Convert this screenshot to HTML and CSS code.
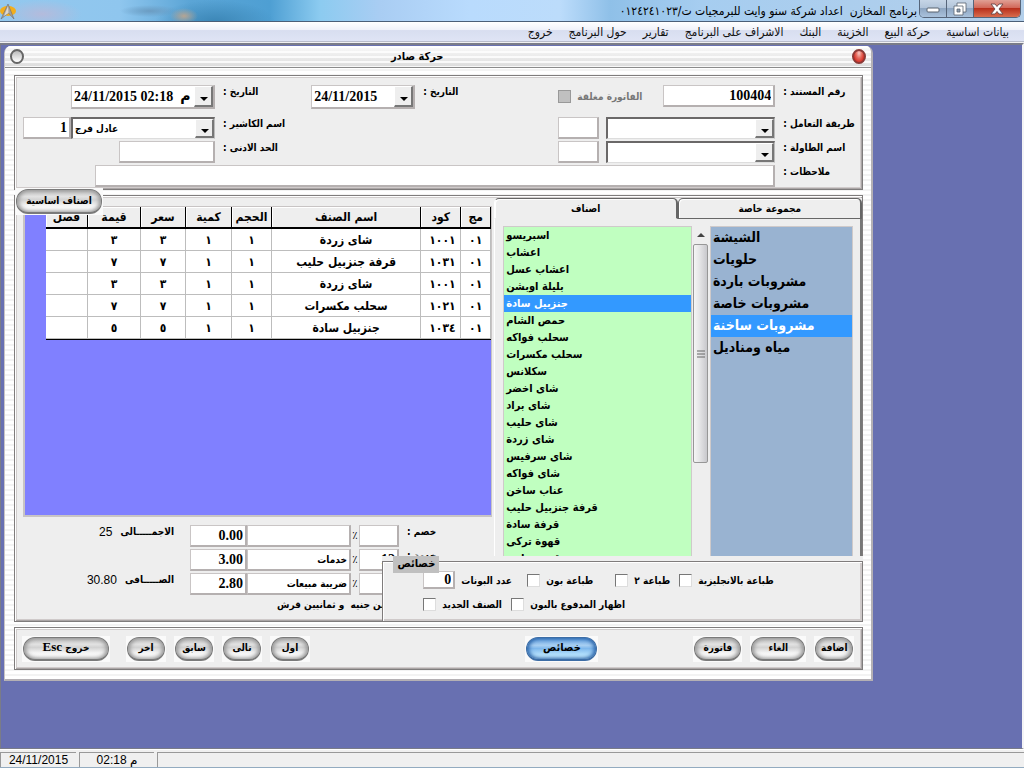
FILE: index.html
```html
<!DOCTYPE html>
<html lang="ar">
<head>
<meta charset="utf-8">
<title>برنامج المخازن</title>
<link rel="stylesheet" href="styles.css">
</head>
<body>
<header class="titlebar">
  <svg class="app-icon" width="16" height="16" viewBox="0 0 16 16"><ellipse cx="8" cy="7" rx="8" ry="5" fill="#f3ae1c"/><path d="M8 0 L14 15 L8.500 9 L1 15 Z" fill="#a5a09c" stroke="#716d6c" stroke-width=".6"/><path d="M8 2 L8.500 9 L4 12 Z" fill="#ddd8d0"/></svg>
  <h1 class="app-title" dir="rtl">برنامج المخازن&nbsp; اعداد شركة سنو وايت للبرمجيات ت/٠١٢٤٢٤١٠٢٣</h1>
  <div class="win-buttons">
    <button class="win-btn" aria-label="تصغير"><svg width="14" height="12" viewBox="0 0 14 12"><rect x="1" y="5" width="12" height="4" rx="1" fill="#fff" stroke="#59636e"/></svg></button>
    <button class="win-btn" aria-label="استعادة"><svg width="14" height="14" viewBox="0 0 14 14"><g fill="#fff" stroke="#59636e" stroke-width=".8"><path d="M4 1h9v9h-9z"/><path d="M1 4h9v9h-9z"/><path d="M4 7h3v3h-3z" fill="#8d9db0"/></g></svg></button>
    <button class="win-btn close" aria-label="اغلاق"><svg width="14" height="12" viewBox="0 0 14 12"><path d="M1 1h4l2 2.500 2-2.500h4l-4 5 4 5h-4l-2-2.500-2 2.500h-4l4-5z" fill="#fff" stroke="#6a4747" stroke-width=".9"/></svg></button>
  </div>
</header>
<nav class="menubar" dir="rtl">
  <a href="#">بيانات اساسية</a><a href="#">حركة البيع</a><a href="#">الخزينة</a><a href="#">البنك</a><a href="#">الاشراف على البرنامج</a><a href="#">تقارير</a><a href="#">حول البرنامج</a><a href="#">خروج</a>
</nav>
<main class="desktop">
  <section class="window">
    <div class="window-head">
      <button class="orb" aria-label="تصغير"></button>
      <h2 dir="rtl">حركة صادر</h2>
      <button class="orb red" aria-label="اغلاق"></button>
    </div>
    <div class="window-body">
      <form class="panel fields">
        <div class="cell a tall"><span class="combo w-datetime"><select id="dt" class="serif"><option>24/11/2015 02:18 &nbsp;م</option></select></span></div>
        <label class="b" for="dt" dir="rtl">التاريخ :</label>
        <div class="cell c tall"><span class="combo w-full"><select id="date" class="serif"><option>24/11/2015</option></select></span></div>
        <label class="d" for="date" dir="rtl">التاريخ :</label>
        <div class="cell e tall"><input id="closed" class="check off" type="checkbox" disabled><label class="muted" for="closed" dir="rtl">الفاتورة مغلقة</label><input id="doc" class="box w-doc num" value="100404"></div>
        <label class="g" for="doc" dir="rtl">رقم المستند :</label>

        <div class="cell a row2"><input class="box w-code num" value="1" aria-label="كود الكاشير"><span class="combo deep grow"><select id="cashier"><option>عادل فرج</option></select></span></div>
        <label class="b row2" for="cashier" dir="rtl">اسم الكاشير :</label>
        <div class="cell e row2 split"><input class="box w-small" aria-label="كود التعامل"><span class="combo deep grow"><select id="deal"><option></option></select></span></div>
        <label class="g row2" for="deal" dir="rtl">طريقة التعامل :</label>

        <div class="cell a row3"><input id="min" class="box w-min"></div>
        <label class="b row3" for="min" dir="rtl">الحد الادنى :</label>
        <div class="cell e row3 split"><input class="box w-small" aria-label="كود الطاولة"><span class="combo deep grow"><select id="table"><option></option></select></span></div>
        <label class="g row3" for="table" dir="rtl">اسم الطاولة :</label>

        <div class="cell notes"><input id="notes" class="box grow"></div>
        <label class="g row4" for="notes" dir="rtl">ملاحظات :</label>
      </form>

      <section class="panel work">
        <div class="left">
          <div class="sheet">
            <table dir="rtl">
              <colgroup><col class="k1"><col class="k2"><col class="k3"><col class="k4"><col class="k5"><col class="k6"><col class="k7"><col class="k8"></colgroup>
              <thead><tr><th>مج</th><th>كود</th><th>اسم الصنف</th><th>الحجم</th><th>كمية</th><th>سعر</th><th>قيمة</th><th>فصل</th></tr></thead>
              <tbody>
                <tr><td dir="ltr">٠١</td><td dir="ltr" class="code">١٠٠١</td><td>شاى زردة</td><td>١</td><td>١</td><td>٣</td><td>٣</td><td></td></tr>
                <tr><td dir="ltr">٠١</td><td dir="ltr" class="code">١٠٣١</td><td>قرفة جنزبيل حليب</td><td>١</td><td>١</td><td>٧</td><td>٧</td><td></td></tr>
                <tr><td dir="ltr">٠١</td><td dir="ltr" class="code">١٠٠١</td><td>شاى زردة</td><td>١</td><td>١</td><td>٣</td><td>٣</td><td></td></tr>
                <tr><td dir="ltr">٠١</td><td dir="ltr" class="code">١٠٢١</td><td>سحلب مكسرات</td><td>١</td><td>١</td><td>٧</td><td>٧</td><td></td></tr>
                <tr><td dir="ltr">٠١</td><td dir="ltr" class="code">١٠٣٤</td><td>جنزبيل سادة</td><td>١</td><td>١</td><td>٥</td><td>٥</td><td></td></tr>
              </tbody>
            </table>
          </div>
          <div class="totals">
            <div class="sum"><span>25</span><b dir="rtl">الاجمـــــالى</b></div>
            <div class="line"><input class="box num w-amount" value="0.00" aria-label="قيمة الخصم"><input class="box desc" aria-label="بيان الخصم"><span class="pct">٪</span><input id="disc" class="box w-pct"><label for="disc" dir="rtl">خصم :</label></div>
            <div class="sum"></div>
            <div class="line"><input class="box num w-amount" value="3.00" aria-label="قيمة الخدمة"><input class="box desc" dir="rtl" value="خدمات" aria-label="بيان الخدمة"><span class="pct">٪</span><input id="serv" class="box w-pct num" value="12"><label for="serv" dir="rtl">خدمة :</label></div>
            <div class="sum"><span>30.80</span><b dir="rtl">الصـــــافى</b></div>
            <div class="line"><input class="box num w-amount" value="2.80" aria-label="قيمة الضريبة"><input class="box desc" dir="rtl" value="ضريبة مبيعات" aria-label="بيان الضريبة"><span class="pct">٪</span><input class="box w-pct" aria-label="نسبة الضريبة"></div>
            <p class="words" dir="rtl">ثلاثين جنيه&nbsp; و ثمانيين قرش</p>
          </div>
        </div>
        <div class="right">
          <div class="tabs" role="tablist">
            <button class="tab active" role="tab" aria-selected="true">اصناف</button>
            <button class="tab" role="tab" aria-selected="false">مجموعة خاصة</button>
          </div>
          <div class="lists">
            <ul class="items" role="listbox" aria-label="اصناف">
              <li>اسبريسو</li><li>اعشاب</li><li>اعشاب عسل</li><li>بليلة اوبشن</li><li class="on">جنزبيل سادة</li><li>حمص الشام</li><li>سحلب فواكه</li><li>سحلب مكسرات</li><li>سكلانس</li><li>شاى اخضر</li><li>شاى براد</li><li>شاى حليب</li><li>شاى زردة</li><li>شاى سرفيس</li><li>شاى فواكه</li><li>عناب ساخن</li><li>قرفة جنزبيل حليب</li><li>قرفة سادة</li><li>قهوة تركى</li><li>قهوة حليب</li>
            </ul>
            <div class="scroll">
              <svg width="16" height="18" viewBox="0 0 16 18"><path d="M4 11l4-4 4 4z" fill="#444"/></svg>
              <div class="thumb"><svg width="8" height="8" viewBox="0 0 8 8"><path d="M0 1h8M0 4h8M0 7h8" stroke="#666"/></svg></div>
            </div>
            <ul class="groups" role="listbox" aria-label="مجموعات">
              <li>الشيشة</li><li>حلويات</li><li>مشروبات باردة</li><li>مشروبات خاصة</li><li class="on">مشروبات ساخنة</li><li>مياه ومناديل</li>
            </ul>
          </div>
        </div>
        <button class="pill corner">اصناف اساسية</button>
        <div class="props">
          <div class="props-title">خصائص</div>
          <div class="props-box">
            <div class="opts first">
              <input id="bons" class="box num w-bons" value="0"><label class="plain" for="bons">عدد البونات</label>
              <input id="o1" class="check" type="checkbox"><label class="l1" for="o1">طباعة بون</label>
              <input id="o2" class="check" type="checkbox"><label class="l2" for="o2" dir="rtl">طباعة ٢</label>
              <input id="o3" class="check" type="checkbox"><label for="o3">طباعة بالانجليزية</label>
            </div>
            <div class="opts">
              <input id="o4" class="check" type="checkbox"><label class="l4" for="o4">الصنف الجديد</label>
              <input id="o5" class="check" type="checkbox"><label for="o5">اظهار المدفوع بالبون</label>
            </div>
          </div>
        </div>
      </section>

      <footer class="panel actions">
        <button class="pill esc" dir="rtl">خروج <span>Esc</span></button>
        <button class="pill nav">اخر</button>
        <button class="pill nav">سابق</button>
        <button class="pill nav">تالى</button>
        <button class="pill nav">اول</button>
        <button class="pill blue">خصائص</button>
        <button class="pill inv">فاتورة</button>
        <button class="pill cancel">الغاء</button>
        <button class="pill nav">اضافة</button>
      </footer>
    </div>
  </section>
</main>
<footer class="statusbar"><span class="s-date">24/11/2015</span><span class="s-time">02:18 م</span><span class="s-rest"></span></footer>
</body>
</html>
```
FILE: styles.css
```css
* { box-sizing: border-box; }
body {
  margin: 0;
  height: 100vh;
  display: flex;
  flex-direction: column;
  overflow: hidden;
  font-family: "DejaVu Sans Condensed", "DejaVu Sans", sans-serif;
  font-size: 11px;
  color: #000;
  background: #f0f0f0;
}
h1, h2, p, ul { margin: 0; padding: 0; }
ul { list-style: none; }
input, select, button { font: inherit; color: inherit; margin: 0; border-radius: 0; }

/* application frame */
.titlebar {
  height: 22px;
  flex: none;
  display: flex;
  align-items: flex-start;
  background:
    radial-gradient(ellipse 14px 8px at 184px 16px, #b5a594, transparent),
    radial-gradient(ellipse 60px 22px at 215px 22px, #3b86b6, transparent),
    radial-gradient(ellipse 40px 14px at 42px 14px, #b4bbdc, transparent),
    radial-gradient(ellipse 30px 6px at 150px 11px, #6b9cc2, transparent),
    linear-gradient(90deg, #93c8ee 0, #8fc6ee 120px, #5ba5d6 190px, #4e9fd3 270px, #8ccbf0 320px, #a9cdf3 380px, #b9dbfd 470px, #bcdcfb 560px, #8fc0e8 610px, #a6cdf0 700px, #b3cfea 100%);
  border-bottom: 1px solid #4b5f78;
}
.app-icon { margin-top: 4px; }
.app-title { flex: 1; font-size: 12px; line-height: 22px; font-weight: normal; text-align: right; padding-right: 2px; white-space: nowrap; }
.win-buttons { display: flex; margin-right: 3px; height: 18px; border: 1px solid #56657a; border-top: 0; border-radius: 0 0 5px 5px; overflow: hidden; }
.win-btn { width: 27px; padding: 0; border: 0; border-right: 1px solid #56657a; background: linear-gradient(#c6d5e6, #b3c5da 45%, #8ea6c2 50%, #aac2dc); display: flex; align-items: center; justify-content: center; }
.win-btn.close { width: 46px; border-right: 0; background: linear-gradient(#e0a094, #d2695a 45%, #b8301c 50%, #d96d4e); }
.menubar {
  flex: none;
  height: 20px;
  padding: 0 15px 0 0;
  display: flex;
  gap: 16px;
  background: linear-gradient(#fff, #f0f2fa 40%, #d8def0 45%, #dfe4f5);
  border-bottom: 1px solid #b8bccb;
}
.menubar a { color: #111; text-decoration: none; font-size: 12px; line-height: 20px; white-space: nowrap; }
.desktop { flex: 1; min-height: 0; background: #6870b1; border: 2px solid #7a7c88; border-width: 2px 2px 1px 1px; border-right-color: #f4f4f6; margin-top: 1px; padding: 1px 0 0 3px; overflow: hidden; }

/* child window */
.window { width: 85.4%; border: 1px solid #c9c5c3; border-width: 0 2px 2px 1px; border-right-color: #b4b0b4; border-bottom-color: #b4b0b4; border-radius: 7px 7px 0 0; background: repeating-linear-gradient(#fff 0 3px, #f3f3f3 3px 5px); overflow: hidden; }
.window-head { height: 22px; display: flex; align-items: center; justify-content: space-between; padding: 0 5px; background: repeating-linear-gradient(rgba(255,255,255,.8) 0 2px, transparent 2px 5px), linear-gradient(#fafafa, #dcdcdc); border-bottom: 1px solid #8b8b8b; }
.window-head h2 { font-size: 11px; font-weight: bold; padding-right: 42px; }
.orb { width: 14px; height: 15px; padding: 0; border: 2px solid #666; border-radius: 50%; background: linear-gradient(#bbb, #fff); }
.orb.red { border-color: #8b3b38; background: radial-gradient(ellipse at 50% 20%, #f9c9c4 0, #e56c60 40%, #d4271e 80%); }
.window-body { padding: 7px 8px 9px 9px; display: flex; flex-direction: column; gap: 5px; }
.panel { background: #eee; border: 1px solid #7f7c7c; box-shadow: inset 1px 1px #fff, inset -1px -1px #aaa5a5, inset 2px 2px #d0cccc, inset -2px -2px #cfcaca; }

/* fields */
.fields {
  display: grid;
  grid-template-columns: 192fr 96fr 104fr 143fr 217fr 87px;
  grid-template-rows: 30px 22px 22px 22px;
  row-gap: 2px;
  padding: 9px 0 2px 8px;
  height: 115px;
}
.cell { display: flex; align-items: stretch; min-width: 0; }
.a { grid-column: 1; justify-content: flex-end; }
.b { grid-column: 2; }
.c { grid-column: 3; }
.d { grid-column: 4; }
.e { grid-column: 5; }
.g { grid-column: 6; }
.row2 { grid-row: 2; }
.row3 { grid-row: 3; }
.row4 { grid-row: 4; }
.tall { height: 24px; grid-row: 1; align-items: center; }
.tall.e { height: 22px; }
.tall .combo { height: 24px; }
.fields > label { padding-left: 8px; line-height: 14px; font-weight: bold; font-size: 10px; text-align: left; white-space: nowrap; }
.notes { grid-column: 1 / 6; grid-row: 4; padding-left: 72px; }
.split { gap: 7px; }
.box { display: block; min-width: 0; height: 22px; background: #fff; border: 1px solid #c9c5c5; border-right: 2px solid #b5b0b0; border-bottom: 2px solid #b5b0b0; padding: 0 2px; font-weight: bold; outline: 0; }
.num { font-family: "Liberation Serif", serif; font-size: 14px; text-align: right; }
.serif { font-family: "Liberation Serif", "DejaVu Sans", serif; font-size: 14px; }
.grow { flex: 1; min-width: 0; }
.w-code { width: 48px; }
.w-min { width: 96px; }
.w-small { width: 41px; }
.w-doc { width: 112px; margin-left: auto; }
.w-full { width: 100%; }
.w-datetime { width: 144px; }
.combo { position: relative; display: flex; background: #fff; border: 1px solid #c9c5c5; border-right: 2px solid #b5b0b0; border-bottom: 2px solid #b5b0b0; }
.combo.deep { border: 2px solid #6a6868; border-width: 2px 1px 1px 2px; border-right-color: #bbb; border-bottom-color: #ddd; }
.combo select { appearance: none; width: 100%; border: 0; background: transparent; padding: 0 18px 0 2px; font-weight: bold; text-align: left; outline: 0; }
.combo select:not(.serif) { font-size: 10px; }
.combo::before { content: ""; position: absolute; right: 0; top: 0; bottom: 0; width: 16px; background: #eee; border: 1px solid #fff; border-right: 2px solid #777; border-bottom: 2px solid #777; pointer-events: none; }
.combo::after { content: ""; position: absolute; right: 5px; top: 50%; border: 4px solid transparent; border-top-color: #000; border-bottom: 0; pointer-events: none; }
.check { appearance: none; flex: none; width: 13px; height: 13px; background: #fff; border: 1px solid #777; border-right-color: #ddd; border-bottom-color: #ddd; }
.check.off { background: #c0c0c0; border-color: #999; }
.muted { color: #777; font-weight: bold; font-size: 10px; padding-left: 6px; white-space: nowrap; }

/* work area */
.work { position: relative; display: flex; height: 427px; padding: 2px 0 2px 8px; }
.left { flex: 471; min-width: 0; display: flex; flex-direction: column; }
.right { flex: 368; min-width: 0; display: flex; flex-direction: column; background: #eee; }
.sheet { height: 312px; margin-top: 8px; margin-right: 2px; padding-left: 21px; background: #8080ff; border: 1px solid #c8c4c4; border-width: 1px 1px 2px 2px; }
.sheet table { width: 100%; table-layout: fixed; border-collapse: separate; border-spacing: 0; background: #fff; border-bottom: 1px solid #000; font-weight: bold; font-size: 12px; }
.k1 { width: 30px; } .k2 { width: 40px; } .k4 { width: 40px; } .k5 { width: 46px; } .k6 { width: 45px; } .k7 { width: 53px; } .k8 { width: 42px; }
.sheet th { height: 22px; padding: 0; background: #eee; border: solid #000; border-width: 0 1px 2px 0; box-shadow: inset 1px 1px #fff; line-height: 18px; white-space: nowrap; }
.sheet td { height: 22px; padding: 0; text-align: center; line-height: 18px; border: solid #bdbdbd; border-width: 0 1px 1px 0; overflow: hidden; white-space: nowrap; }
.sheet td.code { text-align: left; padding-left: 8px; }
.totals { display: grid; grid-template-columns: 160px 1fr; row-gap: 2px; column-gap: 7px; padding-top: 8px; grid-auto-rows: 22px; }
.line { display: flex; min-width: 0; }
.sum { display: flex; justify-content: flex-end; align-items: flex-start; gap: 8px; padding-right: 9px; font-family: "Liberation Sans", sans-serif; font-size: 12px; line-height: 14px; }
.sum b { font-family: "DejaVu Sans Condensed", "DejaVu Sans", sans-serif; font-size: 10px; white-space: nowrap; }
.w-amount { width: 57px; }
.desc { width: 104px; font-size: 10px; text-align: right; }
.w-pct { width: 40px; }
.pct { width: 8px; text-align: center; line-height: 22px; font-size: 11px; }
.line label { padding-left: 8px; font-weight: bold; font-size: 10px; line-height: 14px; white-space: nowrap; }
.words { grid-column: 2; padding-left: 87px; font-size: 10px; font-weight: bold; line-height: 16px; text-align: left; white-space: nowrap; }

/* tabs and lists */
.tabs { display: flex; flex: none; }
.tab { flex: 1; height: 21px; padding: 0; border: solid #666; border-width: 1px 2px 1px 1px; border-radius: 5px 5px 0 0; background: #eee; font-weight: bold; font-size: 10px; box-shadow: inset 1px 1px #fff; }
.tab.active { border-bottom-color: #eee; border-left-color: #fff; }
.lists { flex: 1; min-height: 0; display: flex; padding: 7px 7px 0 8px; border-left: 1px solid #fff; border-right: 2px solid #777; }
.lists ul { overflow: hidden; font-weight: bold; border: 1px solid #cfcaca; }
.items { flex: 190; background: #c0ffc0; font-size: 11px; }
.items li { height: 17px; line-height: 17px; padding-left: 2px; white-space: nowrap; }
.scroll { width: 18px; flex: none; background: #eee; display: flex; flex-direction: column; align-items: center; }
.thumb { width: 15px; height: 219px; background: linear-gradient(90deg, #f5f5f5, #e4e4e6 45%, #c8c8cc); border: 1px solid #979797; border-radius: 2px; display: flex; align-items: center; justify-content: center; }
.groups { flex: 144; background: #99b3d1; font-size: 14px; }
.groups li { height: 22px; line-height: 20px; padding-left: 2px; white-space: nowrap; }
.lists .on { background: #3399ff; color: #fff; }

/* properties box lying over the work area */
.props { position: absolute; right: -1px; bottom: -1px; width: 481px; }
.props-title { position: absolute; left: 11px; top: 0; width: 46px; height: 17px; line-height: 15px; text-align: center; background: #c0c0c0; font-weight: bold; font-size: 11px; }
.props-box { margin-top: 5px; height: 61px; background: #eee; border: 1px solid #7f7c7c; box-shadow: inset 1px 1px #fff, inset -2px -2px #cfcaca, 0 -5px #eee; padding: 9px 0 0 40px; display: flex; flex-direction: column; gap: 6px; }
.opts { display: flex; align-items: center; height: 18px; font-weight: bold; font-size: 10px; white-space: nowrap; }
.opts label { padding-left: 6px; text-align: left; }
.w-bons { width: 32px; height: 18px; }
.opts .plain { width: 72px; }
.opts .l1 { width: 75px; }
.opts .l2 { width: 51px; }
.opts .l4 { width: 75px; }

/* buttons: a white block with a glossy capsule in it */
.pill { position: relative; z-index: 0; height: 26px; padding: 0 0 2px; border: 0; background: #fafafa; font-weight: bold; font-size: 10px; line-height: 18px; white-space: nowrap; }
.pill::before { content: ""; position: absolute; z-index: -1; inset: 1px; border: 1px solid #7a7a7a; border-bottom-width: 2px; border-radius: 12px; background: linear-gradient(#bdbdbd 0, #e2e2e2 30%, #d2d2d2 45%, #f4f4f4 70%, #fff); box-shadow: inset 2px 0 4px #999, inset -2px 0 4px #999; }
.pill.corner { position: absolute; z-index: 1; left: 0; top: -8px; width: 88px; height: 27px; }
.actions { display: flex; align-items: center; height: 43px; padding: 0 8px 0 7px; gap: 8px; }
.nav { width: 40px; }
.esc { width: 88px; margin-right: 8px; }
.esc span { font-family: "Liberation Serif", serif; font-size: 13px; }
.blue { width: 73px; margin-left: auto; font-size: 11px; }
.blue::before { border-color: #3d6da5; background: linear-gradient(#5f9ddd 0, #a8cff2 35%, #7fb8ec 50%, #b5e2fd 80%, #d5f4ff); box-shadow: inset 2px 0 4px #2c66ab, inset -2px 0 4px #2c66ab; }
.inv { width: 49px; margin-left: 87px; }
.cancel { width: 56px; }

/* status bar */
.statusbar { flex: none; height: 19px; display: flex; gap: 3px; padding-top: 2px; border-top: 1px solid #fff; border-bottom: 1px solid #93abc0; background: #f0f0f0; font-family: "Liberation Sans", "DejaVu Sans", sans-serif; font-size: 12px; line-height: 14px; }
.statusbar span { border: 1px solid #999; border-width: 1px 0 0 1px; text-align: center; white-space: nowrap; }
.s-date { width: 76px; }
.s-time { width: 75px; }
.s-rest { flex: 1; }
```
